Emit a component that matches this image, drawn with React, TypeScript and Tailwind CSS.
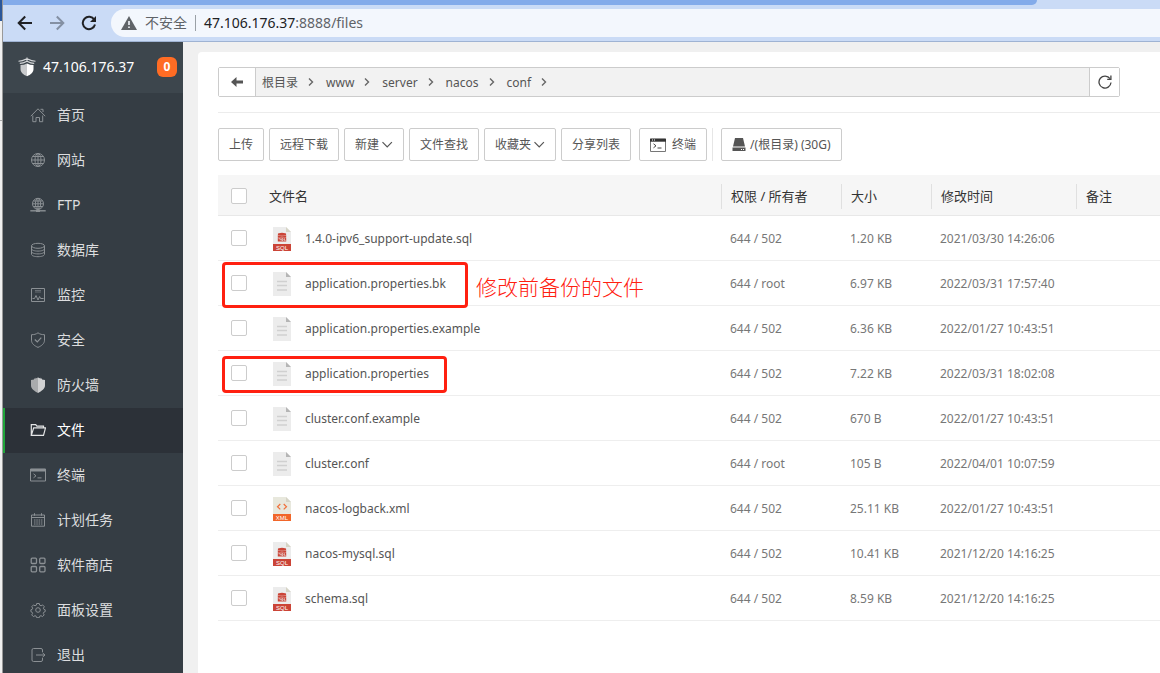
import React from "react";

type IconProps = { className?: string };

const line = {
  viewBox: "0 0 16 16",
  width: 16,
  height: 16,
  fill: "none",
  stroke: "currentColor",
  strokeWidth: 1,
  "aria-hidden": true,
} as const;

const HomeIcon = () => (
  <svg {...line}>
    <path d="M.8 9.2 8 1.8l7.200 7.400M2.800 8.500v6.200h3.200v-4.200h3.500v4.200h3.200V8.500M10.500 2.300h2.500v2.700" />
  </svg>
);
const GlobeIcon = () => (
  <svg {...line}>
    <circle cx="8" cy="8" r="6.500" />
    <ellipse cx="8" cy="8" rx="3" ry="6.500" />
    <path d="M8 1.500v13M1.500 8h13M2.600 4.500h10.800M2.600 11.500h10.800" />
  </svg>
);
const FtpIcon = () => (
  <svg {...line}>
    <circle cx="8" cy="6.800" r="5.500" />
    <ellipse cx="8" cy="6.800" rx="2.600" ry="5.500" />
    <path d="M8 1.300v11M2.500 6.800h11M3.400 4h9.200M3.400 9.500h9.200" />
    <path d="M.3 13.800h15.400" strokeWidth="1.400" />
    <path d="M6 13.800h4" strokeWidth="2.400" />
  </svg>
);
const DatabaseIcon = () => (
  <svg {...line}>
    <ellipse cx="8" cy="3.800" rx="6.500" ry="2.500" />
    <path d="M1.500 3.800v8.500c0 1.400 2.900 2.400 6.500 2.400s6.500-1 6.500-2.400V3.800M1.500 6.700c0 1.400 2.900 2.400 6.500 2.400s6.500-1 6.500-2.400M1.500 9.500c0 1.400 2.900 2.400 6.500 2.400s6.500-1 6.500-2.400" />
  </svg>
);
const MonitorIcon = () => (
  <svg {...line}>
    <path d="M1.500 1.500h13v13h-13z" />
    <path d="M5 3.500h6M5 5h6" opacity=".6" />
    <path d="M2.500 11.500h2l1.500-3 2 4.500 1.600-3.500 1 2h3" />
  </svg>
);
const SafeIcon = () => (
  <svg {...line}>
    <path d="M8 .8C6 2.300 4 2.700 1.500 2.700v5.500c0 3.300 2.700 5.500 6.500 7.200 3.800-1.700 6.500-3.900 6.500-7.200V2.700C12 2.700 10 2.300 8 .8z" />
    <path d="m4.800 7.500 2.500 2.500 4-4.300" strokeWidth="1.200" />
  </svg>
);
const FirewallIcon = () => (
  <svg viewBox="0 0 16 16" width="16" height="16" aria-hidden>
    <path fill="#a9abad" d="M8 .2 6.800 1.200 5.500.8v1L4 1.500v1L1 3v5.500c0 3.200 3.200 5.500 7 7.500z" />
    <path fill="#d0d1d2" d="m8 .2 1.200 1 1.300-.4v1l1.500-.3v1l3 .5v5.500c0 3.200-3.200 5.500-7 7.500z" />
  </svg>
);
const FolderIcon = () => (
  <svg {...line} strokeWidth={1.2}>
    <path d="M1.300 13.300V2.600h4.400l1.200 1.600h6.600v1.600M1.300 13.400 3.700 5.800h11.800l-2 7.600z" />
  </svg>
);
const TerminalIcon = ({ className }: IconProps) => (
  <svg {...line} className={className}>
    <path d="M.5 2h15v12H.5z" />
    <path d="M.5 3.200h15" strokeWidth="2.600" />
    <path d="m3.500 6.800 2.500 2-2.500 2M7.500 10.900h4" />
  </svg>
);
const DarkTerminalIcon = () => (
  <svg {...line}>
    <path d="M.5 2h15v12.500H.5z" stroke="#777" />
    <path d="M0 3.200h16" stroke="#333" strokeWidth="3" />
    <path d="M2 3h1M4 3h1" stroke="#fff" />
    <path d="m3.500 6.800 2.500 2-2.500 2M7.500 11h4" stroke="#444" />
  </svg>
);
const CalendarIcon = () => (
  <svg {...line}>
    <path d="M1.500 3h13v11.200h-13zM1.500 5.500h13M4.500 1.200v2.500M11.500 1.200v2.500" />
    <path d="M4 8h8.500M4 10h8.500M4 12h8.500" strokeDasharray="1.500 .8" />
  </svg>
);
const StoreIcon = () => (
  <svg {...line} strokeWidth={1.3}>
    <rect x="1.200" y="1.200" width="5.300" height="5.300" rx="1" />
    <rect x="9.700" y="1.200" width="5.300" height="5.300" rx="1" />
    <rect x="1.200" y="9.500" width="5.300" height="5.300" rx="1" />
    <rect x="9.700" y="9.500" width="5.300" height="5.300" rx="1" />
  </svg>
);
const GearIcon = () => (
  <svg {...line}>
    <circle cx="8" cy="8" r="2.300" />
    <path d="m6.700 1.500 2.600 0 .4 1.700 1.400.6 1.500-.9 1.700 1.800-.9 1.500.5 1.100 1.300.5v1.800l-1.400.6-.5 1.200.9 1.500-1.700 1.700-1.500-.9-1.300.5-.4 1.500H6.700l-.5-1.500-1.200-.5-1.600.9-1.700-1.700.9-1.500-.5-1.200L.9 9.600V7.800l1.300-.5.500-1.100-.9-1.500 1.700-1.800 1.500.9 1.300-.6z" />
  </svg>
);
const ExitIcon = () => (
  <svg {...line}>
    <path d="M12.500 5V3q0-1.500-1.500-1.500H3.500Q2 1.500 2 3v10q0 1.500 1.500 1.500H11q1.500 0 1.500-1.500v-2M6 8h9M12.500 5.800 15 8l-2.500 2.200" />
  </svg>
);

const LogoIcon = () => (
  <svg viewBox="0 0 18 20" width="18" height="20" aria-hidden>
    <g fill="none" stroke="#d5d7d9" strokeWidth="1.100">
      <path d="M9 .5v4M.5 4.300Q4 4.300 9 1.800q5 2.500 8.500 2.500M1.800 6.400Q5 6.300 9 4.200q4 2.100 7.200 2.200" />
    </g>
    <path fill="#c9cbcd" d="M2.500 8Q6 8 9 6.500v12.800C5 17.500 2.500 15.500 2.500 12z" />
    <path fill="#fff" d="M15.500 8Q12 8 9 6.500v12.800c4-1.800 6.500-3.800 6.500-7.300z" />
  </svg>
);

const menu = [
  { label: "首页", Icon: HomeIcon },
  { label: "网站", Icon: GlobeIcon },
  { label: "FTP", Icon: FtpIcon },
  { label: "数据库", Icon: DatabaseIcon },
  { label: "监控", Icon: MonitorIcon },
  { label: "安全", Icon: SafeIcon },
  { label: "防火墙", Icon: FirewallIcon },
  { label: "文件", Icon: FolderIcon, active: true },
  { label: "终端", Icon: TerminalIcon },
  { label: "计划任务", Icon: CalendarIcon },
  { label: "软件商店", Icon: StoreIcon },
  { label: "面板设置", Icon: GearIcon },
  { label: "退出", Icon: ExitIcon },
];

type Kind = "sql" | "txt" | "xml";

const FileIcon = ({ kind }: { kind: Kind }) => (
  <svg viewBox="0 0 18 24" width="18" height="24" className="shrink-0" aria-hidden>
    <path fill={kind === "xml" ? "#e8e8dd" : "#ececec"} d="M0 0h13l5 5v19H0z" />
    <path fill={kind === "txt" ? "#b5b5b5" : "#d6d4c5"} d="M13 0v5h5z" />
    {kind === "txt" && <path stroke="#d0d0d0" strokeWidth="1.500" d="M4 9.500h10M4 13.500h10M4 18h10" />}
    {kind === "sql" && (
      <>
        <ellipse cx="9" cy="7.300" rx="4.200" ry="1.500" fill="#cb4437" />
        <path fill="#cb4437" d="M4.800 8.300q4.200 1.700 8.400 0v1.900H4.800zM4.800 10.500h8.400v4H4.800z" />
        <path fill="none" stroke="#ececec" strokeWidth=".7" d="M5.500 11.700h1.800v1.600M8.700 11.700H10v1.700H8.700zM11.400 11.300v2.100h1.200" />
        <path fill="#cb4437" d="M0 17h18v7H0z" />
      </>
    )}
    {kind === "xml" && (
      <>
        <path fill="none" stroke="#f0703a" strokeWidth="1.200" d="M7.300 7 4.500 9.700l2.800 2.700M10.700 7l2.800 2.700-2.800 2.700" />
        <path fill="#f1662a" d="M0 17h18v7H0z" />
      </>
    )}
    {kind !== "txt" && (
      <text x="9" y="22.700" fontSize="6" textAnchor="middle" fill="#fff" fontFamily="Liberation Sans, sans-serif">
        {kind.toUpperCase()}
      </text>
    )}
  </svg>
);

type FileRow = { name: string; kind: Kind; owner: string; size: string; time: string; mark?: string; note?: string };

const files: FileRow[] = [
  { name: "1.4.0-ipv6_support-update.sql", kind: "sql", owner: "644 / 502", size: "1.20 KB", time: "2021/03/30 14:26:06" },
  {
    name: "application.properties.bk", kind: "txt", owner: "644 / root", size: "6.97 KB", time: "2022/03/31 17:57:40",
    mark: "top-px h-[46px] w-[246px]", note: "修改前备份的文件",
  },
  { name: "application.properties.example", kind: "txt", owner: "644 / 502", size: "6.36 KB", time: "2022/01/27 10:43:51" },
  {
    name: "application.properties", kind: "txt", owner: "644 / 502", size: "7.22 KB", time: "2022/03/31 18:02:08",
    mark: "top-[5px] h-[37px] w-[225px]",
  },
  { name: "cluster.conf.example", kind: "txt", owner: "644 / 502", size: "670 B", time: "2022/01/27 10:43:51" },
  { name: "cluster.conf", kind: "txt", owner: "644 / root", size: "105 B", time: "2022/04/01 10:07:59" },
  { name: "nacos-logback.xml", kind: "xml", owner: "644 / 502", size: "25.11 KB", time: "2022/01/27 10:43:51" },
  { name: "nacos-mysql.sql", kind: "sql", owner: "644 / 502", size: "10.41 KB", time: "2021/12/20 14:16:25" },
  { name: "schema.sql", kind: "sql", owner: "644 / 502", size: "8.59 KB", time: "2021/12/20 14:16:25" },
];

const Check = ({ label }: { label: string }) => (
  <input
    type="checkbox"
    aria-label={label}
    className="block size-4 appearance-none rounded-xs border border-[#ccc] bg-white checked:bg-[#20a53a]"
  />
);

const Caret = () => (
  <svg viewBox="0 0 12 8" width="12" height="8" fill="none" stroke="#555" strokeWidth="1.200" aria-hidden>
    <path d="m1.500 1.200 4.700 4.700 4.700-4.700" />
  </svg>
);

const ToolButton = ({ children, className = "" }: { children: React.ReactNode; className?: string }) => (
  <button
    type="button"
    className={"flex h-[33px] shrink-0 items-center rounded-xs border border-[#ccc] bg-white px-2.5 text-xs whitespace-nowrap text-[#555] " + className}
  >
    {children}
  </button>
);

const Chevron = () => (
  <svg viewBox="0 0 6 8" width="6" height="8" fill="none" stroke="#666" strokeWidth="1.400" aria-hidden>
    <path d="m1 .5 3.500 3.500L1 7.500" />
  </svg>
);

const BrowserBar = () => (
  <header className="bg-[#cadbf6]">
    <div className="h-[5px] w-[1034px] max-w-full rounded-br-lg bg-[#83abea]" />
    <div className="flex h-[37px] items-center border-b border-[#9fb3d3] pl-3.5">
      <button type="button" aria-label="后退" className="mr-4 text-[#202124]">
        <svg viewBox="0 0 16 16" width="16" height="16" fill="none" stroke="currentColor" strokeWidth="2" aria-hidden>
          <path d="M15 8H2M8.200 1.500 1.700 8l6.500 6.500" />
        </svg>
      </button>
      <button type="button" aria-label="前进" className="mr-4 text-[#8490a3]">
        <svg viewBox="0 0 16 16" width="16" height="16" fill="none" stroke="currentColor" strokeWidth="2" aria-hidden>
          <path d="M1 8h13M7.800 1.500 14.300 8l-6.500 6.500" />
        </svg>
      </button>
      <button type="button" aria-label="重新加载" className="text-[#202124]">
        <svg viewBox="0 0 16 16" width="16" height="16" fill="none" stroke="currentColor" strokeWidth="2" aria-hidden>
          <path d="M13.300 4.800A6.200 6.200 0 1 0 14 9.500" />
          <path d="M15 1v6H9z" fill="currentColor" stroke="none" />
        </svg>
      </button>
      <div className="ml-3.5 flex h-7 flex-1 items-center rounded-l-full bg-[#f3f7fd] pl-2.5 text-sm">
        <svg viewBox="0 0 16 14" width="16" height="14" aria-hidden>
          <path fill="#5f6368" d="M8 0 16 14H0z" />
          <path fill="#f3f7fd" d="M7.200 5h1.600v4H7.200zM7.200 10.400h1.600V12H7.200z" />
        </svg>
        <span className="ml-2 text-[#5f6368]">不安全</span>
        <span className="mx-2 h-4 w-px bg-[#9aa0a6]" />
        <span className="text-[#202124]">
          47.106.176.37<span className="text-[#5f6368]">:8888/files</span>
        </span>
      </div>
    </div>
  </header>
);

const Sidebar = () => (
  <aside className="w-[180px] shrink-0 bg-[#353d44] text-sm">
    <div className="flex h-[51px] items-center bg-[#3d464d] pr-1.5 pb-0.5 pl-[15px] text-white">
      <LogoIcon />
      <span className="ml-[7px]">47.106.176.37</span>
      <span className="ml-auto flex size-5 items-center justify-center rounded-md bg-[#ff6c24] text-xs font-bold">0</span>
    </div>
    <nav>
      {menu.map(({ label, Icon, active }) => (
        <a
          key={label}
          href="#"
          className={
            "flex h-[45px] items-center gap-[11px] border-l-2 pb-0.5 pl-[25px] " +
            (active ? "border-[#20a53a] bg-[#2c3138] text-white" : "border-transparent text-[#dcdddf]")
          }
        >
          <span className={active ? "text-[#e4e5e6]" : "text-[#8b9094]"}>
            <Icon />
          </span>
          {label}
        </a>
      ))}
    </nav>
  </aside>
);

const PathBar = () => (
  <div className="mr-10 flex h-[30px] rounded-xs border border-[#ccc] bg-[#f2f2f2] text-xs text-[#555]">
    <button type="button" aria-label="返回上级" className="flex w-[37px] items-center justify-center border-r border-[#ccc] bg-white">
      <svg viewBox="0 0 12 10" width="12" height="10" aria-hidden>
        <path fill="#555" d="M5.500 0v3.500H12v3H5.500V10L0 5z" />
      </svg>
    </button>
    <nav className="flex flex-1 items-center pt-0.5 pl-1.5">
      {["根目录", "www", "server", "nacos", "conf"].map((part) => (
        <span key={part} className="flex items-center">
          <a href="#">{part}</a>
          <span className="mr-3 mb-0.5 ml-2.5">
            <Chevron />
          </span>
        </span>
      ))}
    </nav>
    <button type="button" aria-label="刷新" className="flex w-[30px] items-center justify-center border-l border-[#ccc] bg-white">
      <svg viewBox="0 0 14 14" width="14" height="14" fill="none" stroke="#444" strokeWidth="1.300" aria-hidden>
        <path d="M12 3.700A6 6 0 1 0 13 7.500" />
        <path d="M12.900.5v3.800H9.200" />
      </svg>
    </button>
  </div>
);

const Toolbar = () => (
  <div className="flex gap-[5px]">
    <ToolButton>上传</ToolButton>
    <ToolButton>远程下载</ToolButton>
    <ToolButton className="gap-0.5">
      新建
      <Caret />
    </ToolButton>
    <ToolButton>文件查找</ToolButton>
    <ToolButton className="gap-0.5">
      收藏夹
      <Caret />
    </ToolButton>
    <ToolButton>分享列表</ToolButton>
    <div className="ml-[3px] flex items-center border-r border-[#e6e6e6] pr-[5px]">
      <ToolButton className="gap-1.5">
        <DarkTerminalIcon />
        终端
      </ToolButton>
    </div>
    <div className="ml-[3px]">
      <ToolButton className="gap-1">
        <svg viewBox="0 0 14 13" width="14" height="13" aria-hidden>
          <path fill="#555" d="M3 0h8l2 8.500H1zM.500 9.500h13V13H.500z" />
          <path fill="#fff" d="M9 11h1v1H9zM11 11h1v1h-1z" />
        </svg>
        /(根目录) (30G)
      </ToolButton>
    </div>
  </div>
);

const heads = ["权限 / 所有者", "大小", "修改时间", "备注"];

const FileTable = () => (
  <table className="w-full table-fixed border-separate border-spacing-0 text-left text-xs text-[#777]">
    <colgroup>
      <col className="w-[51px]" />
      <col />
      <col className="w-[120px]" />
      <col className="w-[90px]" />
      <col className="w-[145px]" />
      <col className="w-[84px]" />
    </colgroup>
    <thead>
      <tr className="h-[41px] bg-[#f6f6f6] text-[13px] text-[#333]">
        <th className="border-b border-[#e8e8e8] pt-0.5 pl-[13px]">
          <Check label="全选" />
        </th>
        <th className="border-b border-[#e8e8e8] pt-1 font-normal">文件名</th>
        {heads.map((h) => (
          <th key={h} className="border-b border-[#e8e8e8] p-0 pt-0.5 font-normal">
            <div className="flex h-[25px] items-center border-l border-[#e0e0e0] pt-0.5 pl-[9px] whitespace-nowrap">{h}</div>
          </th>
        ))}
      </tr>
    </thead>
    <tbody>
      {files.map((f) => (
        <tr key={f.name} className="h-[45px]">
          <td className="relative border-b border-[#eee] pl-[13px]">
            <Check label={f.name} />
            {f.mark && (
              <div className={"pointer-events-none absolute left-1 z-10 rounded-sm border-3 border-[#ff2010] " + f.mark}>
                {f.note && (
                  <span className="absolute top-1.5 left-full ml-[11px] text-[21px] leading-8 font-light whitespace-nowrap text-[#ff2010]">
                    {f.note}
                  </span>
                )}
              </div>
            )}
          </td>
          <td className="border-b border-[#eee] pt-0.5 pl-1">
            <div className="flex items-center gap-3.5 text-[#555]">
              <FileIcon kind={f.kind} />
              <a href="#">{f.name}</a>
            </div>
          </td>
          <td className="border-b border-[#eee] pt-0.5 pl-[9px]">{f.owner}</td>
          <td className="border-b border-[#eee] pt-0.5 pl-[9px]">{f.size}</td>
          <td className="border-b border-[#eee] pt-0.5 pl-[9px]">{f.time}</td>
          <td className="border-b border-[#eee]" />
        </tr>
      ))}
    </tbody>
  </table>
);

export default function App() {
  return (
    <div className="flex h-screen overflow-hidden bg-[#f0f0f0] font-['Noto_Sans','Noto_Sans_CJK_SC',sans-serif]">
      <div className="flex w-[3px] shrink-0 flex-col border-r border-[#999] bg-[#f0f0f0]">
        <div className="h-[21px] bg-[#2b579a]" />
        <div className="h-[100px] border-b border-[#aaa]" />
      </div>
      <div className="flex min-w-0 flex-1 flex-col">
        <BrowserBar />
        <div className="flex min-h-0 flex-1">
          <Sidebar />
          <main className="mt-2.5 ml-[15px] min-w-0 flex-1 rounded-tl bg-white pt-[15px] pl-5">
            <PathBar />
            <div className="mt-[15px] mb-[15px] border-t border-[#ececec]" />
            <Toolbar />
            <div className="mt-3.5">
              <FileTable />
            </div>
          </main>
        </div>
      </div>
    </div>
  );
}
